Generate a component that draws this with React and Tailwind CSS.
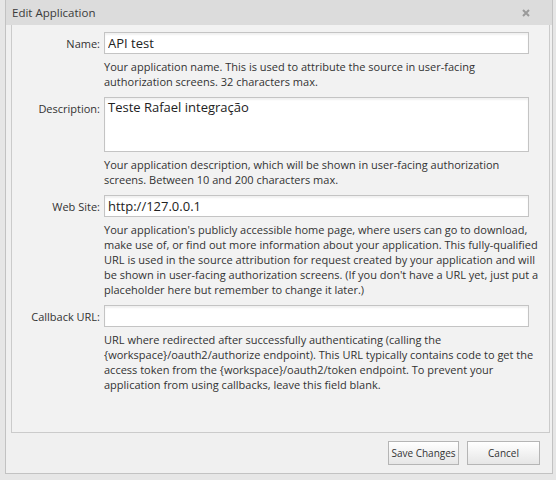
import React from 'react';

const font = { fontFamily: '"Open Sans", "Liberation Sans", sans-serif' };

function Field({ label, children, help }) {
  return (
    <>
      <label className="pt-[4px] pr-[4px] text-right text-[11px] leading-[15px] text-[#333]">{label}</label>
      <div className="mb-[8px]">
        {children}
        <p className="mt-[5px] pr-[8px] text-[11px] leading-[15px] text-[#333]">{help}</p>
      </div>
    </>
  );
}

function TextInput({ value }) {
  return (
    <input
      readOnly
      value={value}
      className="block h-[22px] w-[425px] border border-[#c4c4c4] bg-white px-[3px] text-[13px] text-[#222] shadow-[inset_0_2px_2px_rgba(0,0,0,0.06)] outline-none"
      style={font}
    />
  );
}

export default function App() {
  return (
    <div className="h-[480px] w-[556px] overflow-hidden bg-[#e6e6e6] pl-[5px] pr-[3px]" style={font}>
      <div className="flex h-[474px] flex-col border-x border-b border-[#c2c2c2] bg-[#f0f0f0]">
        <div className="flex h-[25px] items-center justify-between bg-[#dcdcdc] pl-[6px] pr-[22px]">
          <span className="text-[11.5px] text-[#3a3a3a]">Edit Application</span>
          <svg width="8" height="8" viewBox="0 0 8 8" className="text-[#9a9a9a]">
            <path d="M1 1 L7 7 M7 1 L1 7" stroke="currentColor" strokeWidth="2" />
          </svg>
        </div>
        <div className="ml-[5px] mr-[2px] h-[408px] border border-t-0 border-[#cbcbcb] bg-[#f2f2f2] pt-[7px]">
          <div className="grid grid-cols-[92px_1fr]">
            <Field label="Name:" help="Your application name. This is used to attribute the source in user-facing authorization screens. 32 characters max.">
              <TextInput value="API test" />
            </Field>
            <Field label="Description:" help="Your application description, which will be shown in user-facing authorization screens. Between 10 and 200 characters max.">
              <textarea
                readOnly
                value="Teste Rafael integração"
                className="block h-[55px] w-[425px] resize-none border border-[#c4c4c4] bg-white px-[3px] py-[1px] text-[13px] leading-[17px] text-[#222] shadow-[inset_0_2px_2px_rgba(0,0,0,0.06)] outline-none"
                style={font}
              />
            </Field>
            <Field label="Web Site:" help="Your application's publicly accessible home page, where users can go to download, make use of, or find out more information about your application. This fully-qualified URL is used in the source attribution for request created by your application and will be shown in user-facing authorization screens. (If you don't have a URL yet, just put a placeholder here but remember to change it later.)">
              <TextInput value="http://127.0.0.1" />
            </Field>
            <Field label="Callback URL:" help="URL where redirected after successfully authenticating (calling the {workspace}/oauth2/authorize endpoint). This URL typically contains code to get the access token from the {workspace}/oauth2/token endpoint. To prevent your application from using callbacks, leave this field blank.">
              <TextInput value="" />
            </Field>
          </div>
        </div>
        <div className="flex justify-end gap-[8px] pr-[12px] pt-[8px]">
          <button className="h-[24px] w-[71px] whitespace-nowrap border border-[#b5b5b5] bg-gradient-to-b from-white to-[#e6e6e6] text-[10px] text-[#333]">Save Changes</button>
          <button className="h-[24px] w-[73px] whitespace-nowrap border border-[#b5b5b5] bg-gradient-to-b from-white to-[#e6e6e6] text-[10px] text-[#333]">Cancel</button>
        </div>
      </div>
    </div>
  );
}
